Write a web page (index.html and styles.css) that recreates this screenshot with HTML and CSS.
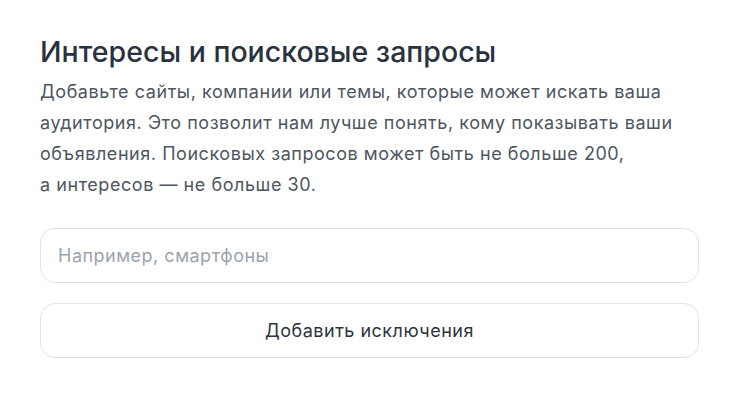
FILE: index.html
```html
<!DOCTYPE html>
<html lang="ru">
<head>
  <meta charset="UTF-8">
  <title>Интересы и поисковые запросы</title>
  <link rel="stylesheet" href="styles.css">
</head>
<body>
  <div class="section">
    <h2 class="title">Интересы и поисковые запросы</h2>
    <p class="desc">Добавьте сайты, компании или темы, которые может искать ваша аудитория. Это позволит нам лучше понять, кому показывать ваши объявления. Поисковых запросов может быть не больше 200,<br>а&nbsp;интересов — не больше 30.</p>
    <input class="field" type="text" placeholder="Например, смартфоны">
    <button class="add-btn">Добавить исключения</button>
  </div>
</body>
</html>
```

FILE: styles.css
```css
body {
  margin: 0;
  background-color: #ffffff;
  font-family: Inter, "Open Sans", Arial, sans-serif;
}
.section {
  padding: 35px 44px 0 40px;
  display: flex;
  flex-direction: column;
}
.title {
  margin: 0;
  font-size: 28.5px;
  font-weight: 500;
  line-height: 34px;
  color: #2a3240;
}
.desc {
  margin: 7px 0 0;
  font-size: 18px;
  letter-spacing: 0.55px;
  line-height: 31px;
  color: #4d5661;
  max-width: 650px;
}
.field {
  margin-top: 28px;
  height: 55px;
  box-sizing: border-box;
  border: 1px solid #dfe3e8;
  border-radius: 15px;
  padding: 0 17px;
  font-family: inherit;
  font-size: 18px;
  letter-spacing: 0.5px;
  color: #2c3440;
  outline: none;
}
.field::placeholder {
  color: #9ba3ad;
}
.add-btn {
  margin-top: 20px;
  height: 55px;
  border: 1px solid #dfe3e8;
  border-radius: 15px;
  background-color: #ffffff;
  font-family: inherit;
  font-size: 18px;
  letter-spacing: 0.5px;
  color: #2c3440;
  cursor: pointer;
}
```
